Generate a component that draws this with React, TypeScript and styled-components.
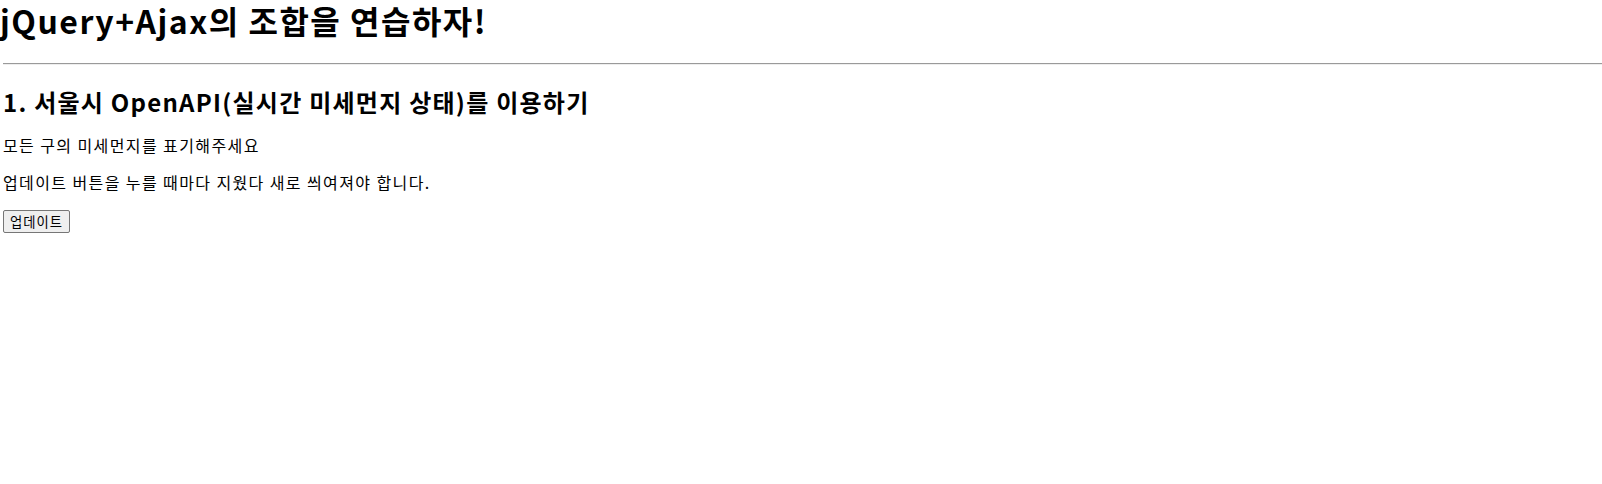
import React from "react";
import styled, { createGlobalStyle } from "styled-components";

const GlobalStyle = createGlobalStyle`
  body {
    margin: 0;
    background: #fff;
    color: #000;
    font-family: "Noto Sans CJK KR", "Noto Sans", sans-serif;
  }
`;

const Page = styled.div`
  padding-left: 3px;
`;

const Title = styled.h1`
  font-size: 32px;
  font-weight: bold;
  letter-spacing: 1.5px;
  margin: 0 0 0 -3px;
  line-height: 40px;
`;

const Divider = styled.hr`
  border: none;
  border-top: 1px solid #9a9a9a;
  border-bottom: 1px solid #eee;
  margin: 23px 0 0 0;
`;

const Section = styled.div``;

const SubTitle = styled.h2`
  font-size: 24px;
  font-weight: bold;
  letter-spacing: 1.25px;
  margin: 20px 0 3px 0;
  line-height: 34px;
`;

const Text = styled.p`
  font-size: 16px;
  letter-spacing: 1.4px;
  margin: 16px 0 0 0;
  line-height: 21px;
`;

const UpdateButton = styled.button`
  margin-top: 17px;
  font-family: "Noto Sans CJK KR", sans-serif;
  font-size: 13.33px;
  letter-spacing: 1px;
  padding: 1px 6px;
  height: 23px;
  border: 1px solid #767676;
  border-radius: 2px;
  background: #efefef;
  color: #000;
`;

export default function App() {
  return (
    <>
      <GlobalStyle />
      <Page>
        <Title>jQuery+Ajax의 조합을 연습하자!</Title>
        <Divider />
        <Section>
          <SubTitle>1. 서울시 OpenAPI(실시간 미세먼지 상태)를 이용하기</SubTitle>
          <Text>모든 구의 미세먼지를 표기해주세요</Text>
          <Text>업데이트 버튼을 누를 때마다 지웠다 새로 씌여져야 합니다.</Text>
          <UpdateButton>업데이트</UpdateButton>
        </Section>
      </Page>
    </>
  );
}
